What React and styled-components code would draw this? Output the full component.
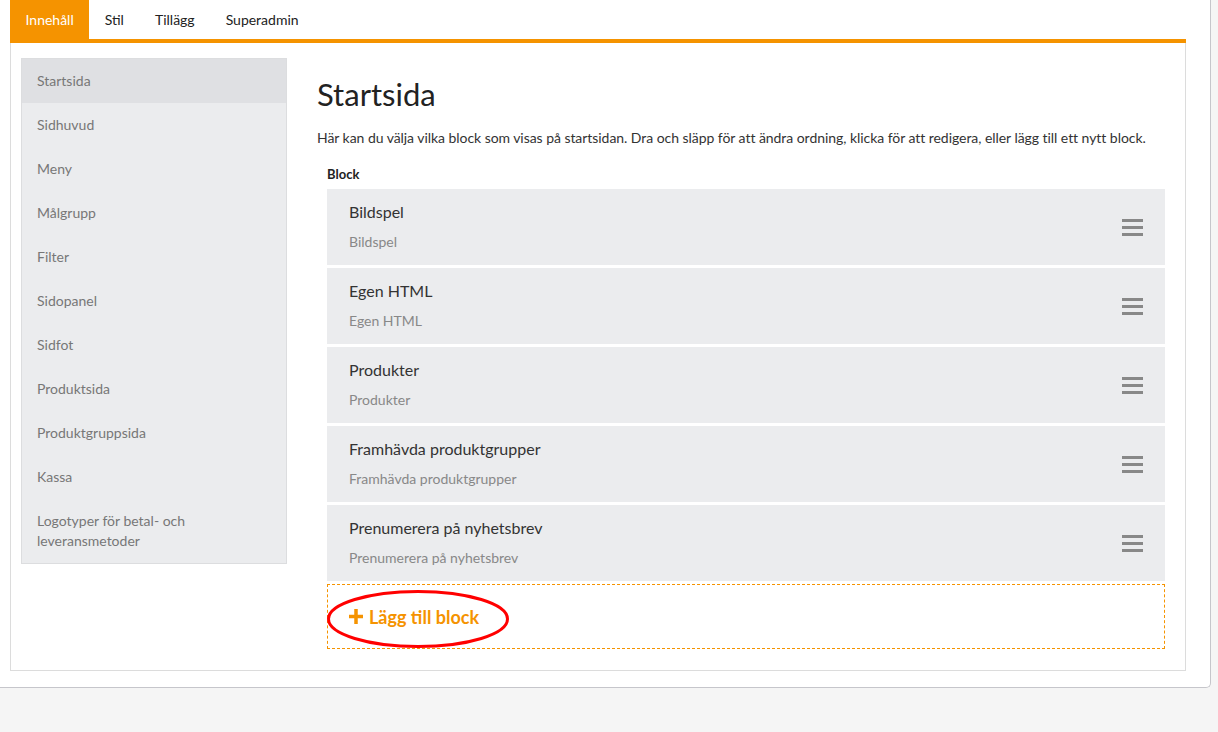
import React from "react";
import styled, { createGlobalStyle } from "styled-components";

const Global = createGlobalStyle`
  html, body { margin: 0; padding: 0; background: #f5f5f5; }
  body { font-family: Lato, "Open Sans", Arial, sans-serif; color: #333; }
  * { box-sizing: border-box; }
`;

const Card = styled.div`
  width: 1211px;
  background: #fff;
  border-right: 1px solid #c6c6cb;
  border-bottom: 1px solid #c6c6cb;
  border-bottom-right-radius: 5px;
  padding: 0 24px 16px 10px;
`;

const Tabs = styled.div`
  display: flex;
  height: 43px;
  border-bottom: 4px solid #f59300;
`;

const Tab = styled.div`
  height: 39px;
  display: flex;
  align-items: center;
  padding: 0 15.5px;
  font-size: 14px;
  color: ${(p) => (p.$active ? "#fff" : "#222")};
  background: ${(p) => (p.$active ? "#f59300" : "transparent")};
`;

const Panel = styled.div`
  display: flex;
  align-items: flex-start;
  gap: 30px;
  border: 1px solid #dcdcdc;
  border-top: none;
  padding: 15px 10px 21px 10px;
`;

const Sidebar = styled.div`
  width: 266px;
  flex: none;
  background: #ebecee;
  border: 1px solid #dcdddf;
`;

const SideItem = styled.div`
  padding: 12px 15px;
  font-size: 14px;
  line-height: 20px;
  color: #777;
  background: ${(p) => (p.$active ? "#dfe0e3" : "transparent")};
`;

const Content = styled.div`
  flex: 1;
  min-width: 0;
`;

const Title = styled.h1`
  margin: 20px 0 17px;
  font-size: 31px;
  line-height: 33px;
  font-weight: 400;
  color: #222;
`;

const Lead = styled.p`
  margin: 0;
  font-size: 14px;
  line-height: 20px;
  letter-spacing: -0.05px;
  color: #333;
`;

const List = styled.div`
  margin: 17px 10px 0;
  display: flex;
  flex-direction: column;
  gap: 3px;
`;

const Label = styled.div`
  font-size: 13px;
  line-height: 18px;
  font-weight: 700;
  color: #222;
  margin-bottom: 3px;
`;

const Row = styled.div`
  height: 76px;
  background: #ebecee;
  display: flex;
  align-items: center;
  justify-content: space-between;
  padding: 0 22px;
`;

const RowText = styled.div`
  display: flex;
  flex-direction: column;
  gap: 10px;
`;

const RowTitle = styled.div`
  font-size: 16px;
  line-height: 20px;
  color: #333;
`;

const RowSub = styled.div`
  font-size: 14px;
  line-height: 20px;
  color: #888;
`;

const AddBox = styled.div`
  position: relative;
  height: 65px;
  border: 1px dashed #f59300;
  display: flex;
  align-items: center;
  padding-left: 21px;
  gap: 6px;
  color: #f59300;
  font-size: 18px;
  font-weight: 700;
`;

const Ring = styled.svg`
  position: absolute;
  left: -2px;
  top: 3px;
  pointer-events: none;
`;

const Hamburger = () => (
  <svg width="21" height="17" viewBox="0 0 21 17">
    <rect x="0" y="0" width="21" height="3" fill="#888" />
    <rect x="0" y="7" width="21" height="3" fill="#888" />
    <rect x="0" y="14" width="21" height="3" fill="#888" />
  </svg>
);

const Plus = () => (
  <svg width="14" height="15" viewBox="0 0 14 15">
    <rect x="5.25" y="0" width="3.5" height="15" fill="#f59300" />
    <rect x="0" y="5.75" width="14" height="3.5" fill="#f59300" />
  </svg>
);

const sideItems = [
  "Startsida",
  "Sidhuvud",
  "Meny",
  "Målgrupp",
  "Filter",
  "Sidopanel",
  "Sidfot",
  "Produktsida",
  "Produktgruppsida",
  "Kassa",
  "Logotyper för betal- och leveransmetoder",
];

const blocks = [
  "Bildspel",
  "Egen HTML",
  "Produkter",
  "Framhävda produktgrupper",
  "Prenumerera på nyhetsbrev",
];

export default function App() {
  return (
    <>
      <Global />
      <Card>
        <Tabs>
          <Tab $active>Innehåll</Tab>
          <Tab>Stil</Tab>
          <Tab>Tillägg</Tab>
          <Tab>Superadmin</Tab>
        </Tabs>
        <Panel>
          <Sidebar>
            {sideItems.map((s, i) => (
              <SideItem key={s} $active={i === 0}>
                {s}
              </SideItem>
            ))}
          </Sidebar>
          <Content>
            <Title>Startsida</Title>
            <Lead>
              Här kan du välja vilka block som visas på startsidan. Dra och släpp för att ändra ordning, klicka för att redigera, eller lägg till ett nytt block.
            </Lead>
            <List>
              <Label>Block</Label>
              {blocks.map((b) => (
                <Row key={b}>
                  <RowText>
                    <RowTitle>{b}</RowTitle>
                    <RowSub>{b}</RowSub>
                  </RowText>
                  <Hamburger />
                </Row>
              ))}
              <AddBox>
                <Plus />
                <span>Lägg till block</span>
                <Ring width="186" height="62" viewBox="0 0 186 62">
                  <ellipse cx="92" cy="31" rx="89.5" ry="27.5" fill="none" stroke="#f00" strokeWidth="3" />
                </Ring>
              </AddBox>
            </List>
          </Content>
        </Panel>
      </Card>
    </>
  );
}
